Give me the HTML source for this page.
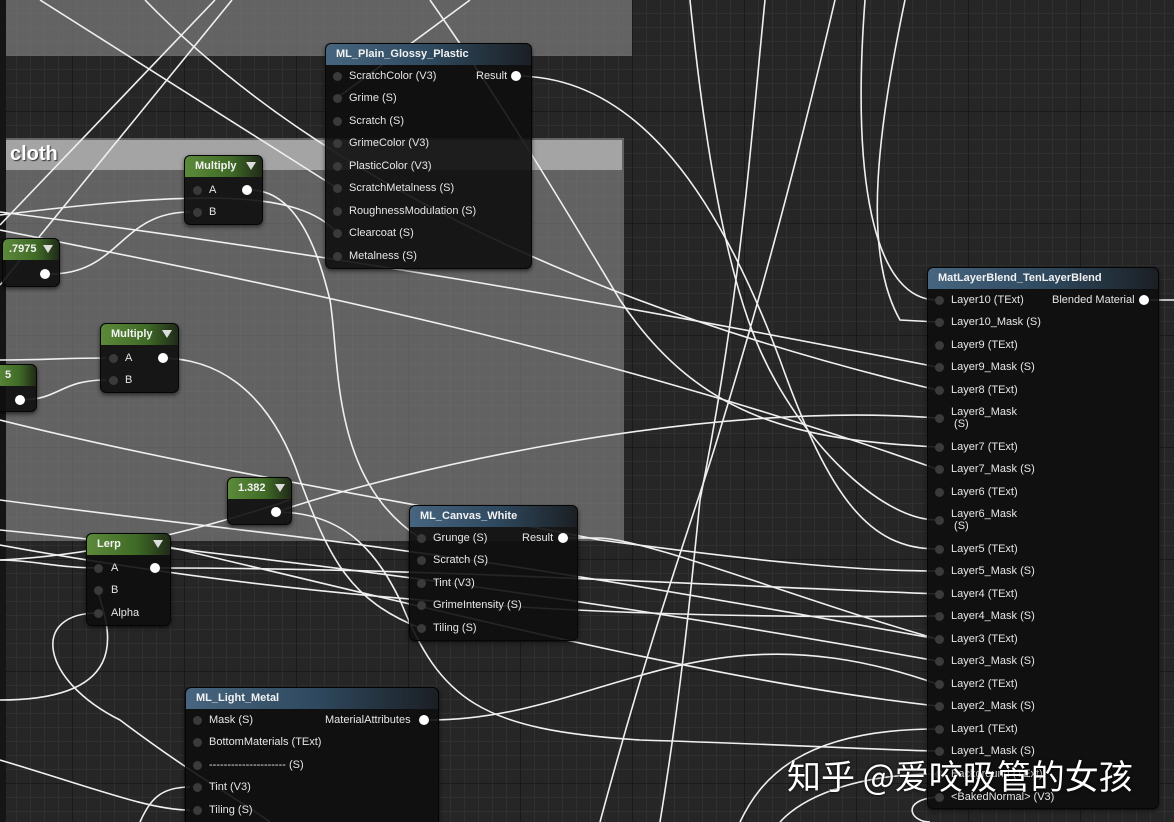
<!DOCTYPE html>
<html style="overflow:hidden;width:1174px;height:822px"><head><meta charset="utf-8"><style>
html,body{margin:0;width:1174px;height:822px;overflow:hidden}
body{background:#262626;font-family:"Liberation Sans","Noto Sans CJK SC",sans-serif;position:relative}
.grid{position:absolute;inset:0;background-image:linear-gradient(#1a1a1a 1px,transparent 1px),linear-gradient(90deg,#1a1a1a 1px,transparent 1px),linear-gradient(#303030 1px,transparent 1px),linear-gradient(90deg,#303030 1px,transparent 1px);background-size:112px 112px,112px 112px,14px 14px,14px 14px;background-position:0 -1px,-40px 0,0 -1px,-40px 0}
.cb{position:absolute;background:rgba(150,150,150,.42)}
.node{position:absolute;background:rgba(14,14,14,.9);border:1px solid #050505;border-radius:6px;box-shadow:0 2px 4px rgba(0,0,0,.6);color:#e6e6e6;font-size:11px;overflow:hidden}
.hd{height:21px;line-height:21px;padding-left:10px;font-weight:bold;font-size:11px;color:#f2f2f2;border-radius:5px 5px 0 0}
.blue{background:linear-gradient(90deg,#47657f,#2f4a60 50%,#1b1f24)}
.green{background:linear-gradient(90deg,#5c8a3a,#3f6a26 60%,#1f2a18)}
.p{position:absolute;white-space:nowrap}
.pin{position:absolute;width:9px;height:9px;border-radius:50%;background:#3a3a3a}
.out{position:absolute;width:10px;height:10px;border-radius:50%;background:#fff}
.tri{position:absolute;width:0;height:0;border-left:5px solid transparent;border-right:5px solid transparent;border-top:8px solid #ddd}
svg{position:absolute;left:0;top:0}
</style></head><body>
<div class="grid"></div>
<div style="position:absolute;left:0;top:0;width:6px;height:822px;background:#151515"></div>
<div class="cb" style="left:6px;top:0;width:626px;height:56px;background:rgba(120,120,120,.75)"></div>
<div class="cb" style="left:6px;top:138px;width:618px;height:403px;background:rgba(135,135,135,.62)"></div>
<div style="position:absolute;left:6px;top:140px;width:616px;height:30px;background:#a4a4a4"></div>
<div style="position:absolute;left:10px;top:143px;font-size:20px;font-weight:bold;color:#fff;text-shadow:1px 1px 1px #333">cloth</div>
<svg width="1174" height="822" fill="none" stroke="#f0f0f0" stroke-width="1.6">
<path d="M40,0 L337,188"/>
<path d="M145,0 C300,160 560,300 937,390"/>
<path d="M232,0 L0,285"/>
<path d="M215,0 L0,225"/>
<path d="M430,0 C500,100 560,200 620,300 C700,420 800,440 937,447"/>
<path d="M470,0 L337,98"/>
<path d="M0,215 C200,190 300,190 337,233"/>
<path d="M0,212 C300,250 600,300 937,367"/>
<path d="M0,230 C300,290 600,350 937,469"/>
<path d="M50,274 C120,274 120,212 190,212"/>
<path d="M20,400 C60,400 60,380 106,380"/>
<path d="M0,360 C50,360 60,358 106,358"/>
<path d="M250,190 C300,190 320,260 330,300 C340,360 330,480 420,538"/>
<path d="M160,358 C240,358 280,420 300,480 C330,560 350,600 420,628"/>
<path d="M516,76 C640,76 720,200 780,360 C830,500 870,549 937,549"/>
<path d="M690,0 C700,100 720,260 760,350 C800,440 880,520 937,520"/>
<path d="M765,0 C750,150 740,300 700,500 C690,600 680,700 660,822"/>
<path d="M835,0 C800,150 760,300 720,430 C700,500 660,600 600,822"/>
<path d="M905,0 C880,120 860,250 900,320 L937,322"/>
<path d="M865,0 C850,200 880,300 937,300"/>
<path d="M276,512 C400,470 700,400 937,418"/>
<path d="M276,512 C350,512 380,560 400,600 C440,700 480,730 640,740 C800,745 880,750 937,751"/>
<path d="M0,420 C200,470 400,500 600,540 C750,560 850,571 937,571"/>
<path d="M0,545 C300,600 600,620 937,616"/>
<path d="M0,530 C300,560 600,600 937,661"/>
<path d="M0,560 C100,555 200,530 290,500"/>
<path d="M160,568 C400,568 600,580 937,594"/>
<path d="M160,545 C400,600 700,680 937,706"/>
<path d="M0,500 C300,540 400,540 937,639"/>
<path d="M0,700 C150,700 100,610 98,590"/>
<path d="M98,613 C30,613 40,680 120,720 C200,780 240,800 270,822"/>
<path d="M98,568 C60,568 30,560 0,560"/>
<path d="M430,720 C600,720 700,600 937,684"/>
<path d="M0,760 C100,790 150,810 190,810"/>
<path d="M190,787 C160,787 150,800 140,822"/>
<path d="M937,729 C800,729 760,780 740,822"/>
<path d="M937,774 C850,774 800,800 780,822"/>
<path d="M937,797 C900,800 910,822 930,822"/>
<path d="M1150,300 L1174,300"/>
<path d="M565,538 L600,538 C650,540 800,600 937,639"/>
</svg>

<div class="node" style="left:325px;top:43px;width:205px;height:224px">
<div class="hd blue">ML_Plain_Glossy_Plastic</div>
<div class="pin" style="left:7px;top:28px"></div><div class="p" style="left:23px;top:26px">ScratchColor (V3)</div>
<div class="p" style="left:150px;top:26px">Result</div><div class="out" style="left:185px;top:27px"></div>
<div class="pin" style="left:7px;top:50px"></div><div class="p" style="left:23px;top:48px">Grime (S)</div>
<div class="pin" style="left:7px;top:73px"></div><div class="p" style="left:23px;top:71px">Scratch (S)</div>
<div class="pin" style="left:7px;top:95px"></div><div class="p" style="left:23px;top:93px">GrimeColor (V3)</div>
<div class="pin" style="left:7px;top:118px"></div><div class="p" style="left:23px;top:116px">PlasticColor (V3)</div>
<div class="pin" style="left:7px;top:140px"></div><div class="p" style="left:23px;top:138px">ScratchMetalness (S)</div>
<div class="pin" style="left:7px;top:163px"></div><div class="p" style="left:23px;top:161px">RoughnessModulation (S)</div>
<div class="pin" style="left:7px;top:185px"></div><div class="p" style="left:23px;top:183px">Clearcoat (S)</div>
<div class="pin" style="left:7px;top:208px"></div><div class="p" style="left:23px;top:206px">Metalness (S)</div>
</div>

<div class="node" style="left:184px;top:155px;width:77px;height:68px">
<div class="hd green">Multiply</div><div class="tri" style="left:61px;top:6px"></div>
<div class="pin" style="left:8px;top:30px"></div><div class="p" style="left:24px;top:28px">A</div><div class="out" style="left:57px;top:29px"></div>
<div class="pin" style="left:8px;top:52px"></div><div class="p" style="left:24px;top:50px">B</div>
</div>
<div class="node" style="left:2px;top:238px;width:56px;height:47px">
<div class="hd green" style="padding-left:6px">.7975</div><div class="tri" style="left:40px;top:6px"></div>
<div class="out" style="left:37px;top:30px"></div>
</div>
<div class="node" style="left:100px;top:323px;width:77px;height:68px">
<div class="hd green">Multiply</div><div class="tri" style="left:61px;top:6px"></div>
<div class="pin" style="left:8px;top:30px"></div><div class="p" style="left:24px;top:28px">A</div><div class="out" style="left:57px;top:29px"></div>
<div class="pin" style="left:8px;top:52px"></div><div class="p" style="left:24px;top:50px">B</div>
</div>
<div class="node" style="left:-6px;top:364px;width:41px;height:46px">
<div class="hd green">5</div>
<div class="out" style="left:20px;top:30px"></div>
</div>
<div class="node" style="left:227px;top:477px;width:63px;height:46px">
<div class="hd green">1.382</div><div class="tri" style="left:47px;top:6px"></div>
<div class="out" style="left:43px;top:29px"></div>
</div>
<div class="node" style="left:86px;top:533px;width:83px;height:91px">
<div class="hd green">Lerp</div><div class="tri" style="left:66px;top:6px"></div>
<div class="pin" style="left:7px;top:30px"></div><div class="p" style="left:24px;top:28px">A</div><div class="out" style="left:63px;top:29px"></div>
<div class="pin" style="left:7px;top:52px"></div><div class="p" style="left:24px;top:50px">B</div>
<div class="pin" style="left:7px;top:75px"></div><div class="p" style="left:24px;top:73px">Alpha</div>
</div>
<div class="node" style="left:409px;top:505px;width:167px;height:134px">
<div class="hd blue">ML_Canvas_White</div>
<div class="pin" style="left:7px;top:28px"></div><div class="p" style="left:23px;top:26px">Grunge (S)</div>
<div class="p" style="left:112px;top:26px">Result</div><div class="out" style="left:148px;top:27px"></div>
<div class="pin" style="left:7px;top:50px"></div><div class="p" style="left:23px;top:48px">Scratch (S)</div>
<div class="pin" style="left:7px;top:73px"></div><div class="p" style="left:23px;top:71px">Tint (V3)</div>
<div class="pin" style="left:7px;top:95px"></div><div class="p" style="left:23px;top:93px">GrimeIntensity (S)</div>
<div class="pin" style="left:7px;top:118px"></div><div class="p" style="left:23px;top:116px">Tiling (S)</div>
</div>
<div class="node" style="left:185px;top:687px;width:252px;height:140px">
<div class="hd blue">ML_Light_Metal</div>
<div class="pin" style="left:7px;top:28px"></div><div class="p" style="left:23px;top:26px">Mask (S)</div>
<div class="p" style="left:139px;top:26px">MaterialAttributes</div><div class="out" style="left:233px;top:27px"></div>
<div class="pin" style="left:7px;top:50px"></div><div class="p" style="left:23px;top:48px">BottomMaterials (TExt)</div>
<div class="pin" style="left:7px;top:73px"></div><div class="p" style="left:23px;top:71px">--------------------- (S)</div>
<div class="pin" style="left:7px;top:95px"></div><div class="p" style="left:23px;top:93px">Tint (V3)</div>
<div class="pin" style="left:7px;top:118px"></div><div class="p" style="left:23px;top:116px">Tiling (S)</div>
</div>

<div class="node" style="left:927px;top:267px;width:230px;height:540px">
<div class="hd blue">MatLayerBlend_TenLayerBlend</div>
<div class="p" style="left:124px;top:26px">Blended Material</div><div class="out" style="left:211px;top:27px"></div>
<div class="pin" style="left:7px;top:28px"></div><div class="p" style="left:23px;top:26px">Layer10 (TExt)</div>
<div class="pin" style="left:7px;top:50px"></div><div class="p" style="left:23px;top:48px">Layer10_Mask (S)</div>
<div class="pin" style="left:7px;top:73px"></div><div class="p" style="left:23px;top:71px">Layer9 (TExt)</div>
<div class="pin" style="left:7px;top:95px"></div><div class="p" style="left:23px;top:93px">Layer9_Mask (S)</div>
<div class="pin" style="left:7px;top:118px"></div><div class="p" style="left:23px;top:116px">Layer8 (TExt)</div>
<div class="pin" style="left:7px;top:146px"></div><div class="p" style="left:23px;top:138px;line-height:12px">Layer8_Mask<br>&nbsp;(S)</div>
<div class="pin" style="left:7px;top:175px"></div><div class="p" style="left:23px;top:173px">Layer7 (TExt)</div>
<div class="pin" style="left:7px;top:197px"></div><div class="p" style="left:23px;top:195px">Layer7_Mask (S)</div>
<div class="pin" style="left:7px;top:220px"></div><div class="p" style="left:23px;top:218px">Layer6 (TExt)</div>
<div class="pin" style="left:7px;top:248px"></div><div class="p" style="left:23px;top:240px;line-height:12px">Layer6_Mask<br>&nbsp;(S)</div>
<div class="pin" style="left:7px;top:277px"></div><div class="p" style="left:23px;top:275px">Layer5 (TExt)</div>
<div class="pin" style="left:7px;top:299px"></div><div class="p" style="left:23px;top:297px">Layer5_Mask (S)</div>
<div class="pin" style="left:7px;top:322px"></div><div class="p" style="left:23px;top:320px">Layer4 (TExt)</div>
<div class="pin" style="left:7px;top:344px"></div><div class="p" style="left:23px;top:342px">Layer4_Mask (S)</div>
<div class="pin" style="left:7px;top:367px"></div><div class="p" style="left:23px;top:365px">Layer3 (TExt)</div>
<div class="pin" style="left:7px;top:389px"></div><div class="p" style="left:23px;top:387px">Layer3_Mask (S)</div>
<div class="pin" style="left:7px;top:412px"></div><div class="p" style="left:23px;top:410px">Layer2 (TExt)</div>
<div class="pin" style="left:7px;top:434px"></div><div class="p" style="left:23px;top:432px">Layer2_Mask (S)</div>
<div class="pin" style="left:7px;top:457px"></div><div class="p" style="left:23px;top:455px">Layer1 (TExt)</div>
<div class="pin" style="left:7px;top:479px"></div><div class="p" style="left:23px;top:477px">Layer1_Mask (S)</div>
<div class="pin" style="left:7px;top:502px"></div><div class="p" style="left:23px;top:500px">Background (TExt)</div>
<div class="pin" style="left:7px;top:525px"></div><div class="p" style="left:23px;top:523px">&lt;BakedNormal&gt; (V3)</div>
</div>
<div style="position:absolute;left:787px;top:750px;font-size:34px;color:#fff;white-space:nowrap;text-shadow:0 0 3px #000;font-family:'Noto Sans CJK SC',sans-serif">知乎 @爱咬吸管的女孩</div>
</body></html>
